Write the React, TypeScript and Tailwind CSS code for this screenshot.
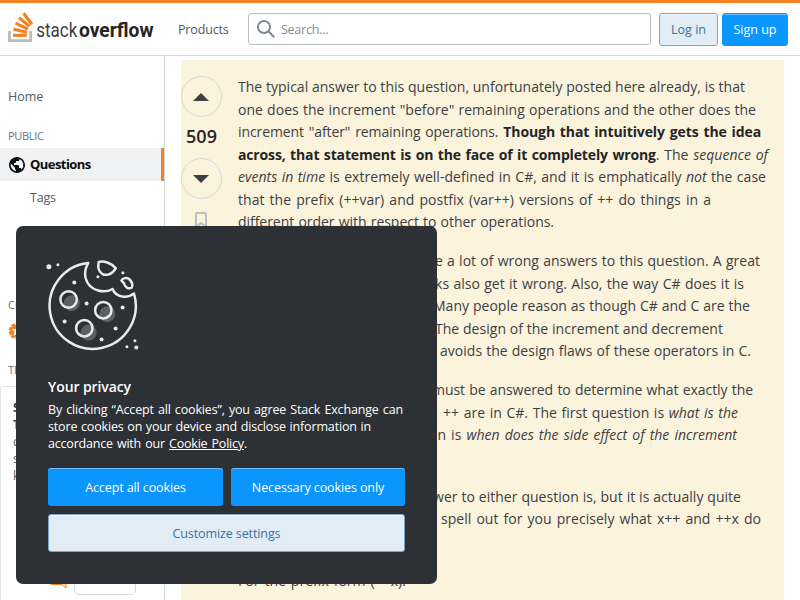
import type { ReactNode } from "react";

function Logo() {
  return (
    <svg width="150" height="32" viewBox="0 0 150 32" className="block shrink-0">
      <path d="M21.4 19H24v11H0V19h2.8v8.2h18.6z" fill="#bcbbbb" />
      <g stroke="#f48024" strokeWidth="3.1">
        <path d="M5 23.3h13.800" />
        <path d="M5.500 17.300l13.500 2.900" />
        <path d="M7.500 11.200l12.400 5.900" />
        <path d="M11 5.700l10.500 8.700" />
        <path d="M15.600 1.300l8.300 11" />
      </g>
      <text x="28.300" y="24.500" fontFamily="Roboto" fontSize="20" fontWeight="400" textLength="41" lengthAdjust="spacingAndGlyphs" fill="#3b3e41">stack</text>
      <text x="71" y="24.500" fontFamily="Roboto" fontSize="20" fontWeight="700" textLength="74.500" lengthAdjust="spacingAndGlyphs" fill="#222426">overflow</text>
    </svg>
  );
}

function Cookie() {
  return (
    <svg width="96" height="96" viewBox="43.400 257.500 96 96" fill="none" className="block">
      <g fill="#5c6064">
        <circle cx="71.200" cy="302.700" r="8" />
        <circle cx="106.700" cy="313.700" r="8" />
        <circle cx="88" cy="332" r="8" />
      </g>
      <g stroke="#e1ecf4" strokeWidth="2.500" strokeLinejoin="round">
        <path d="M87.600 262.400A43.100 43.100 0 1 0 133.400 293C127 298 115.500 297.500 112 288.500C103 293.500 91 290 86.500 281.500C83.500 275.500 83.800 269 87.600 262.400Z" />
        <path d="M98.200 261.400C103.500 260 111.500 263 115.200 267.800C111 274.500 105.500 275.500 101.500 273.300C98 271 97 266.500 98.200 261.400Z" />
        <path d="M120.800 280C122 277.500 126.500 276.500 129 279C131.500 281.500 132.700 285.500 131 287.200C128 289 124 286.500 123.500 282.800Z" />
        <circle cx="68" cy="299" r="8.200" />
        <circle cx="102.700" cy="309.700" r="8.200" />
        <circle cx="83.700" cy="327.700" r="8.200" />
      </g>
      <g fill="#e1ecf4">
        <circle cx="48.300" cy="266.300" r="2.500" />
        <circle cx="57.300" cy="264.300" r="1.500" />
        <circle cx="73.700" cy="282" r="2" />
        <circle cx="97.300" cy="276.300" r="1.500" />
        <circle cx="122.300" cy="272.300" r="1.500" />
        <circle cx="86" cy="303" r="2" />
        <circle cx="122" cy="307" r="2" />
        <circle cx="64" cy="321" r="2" />
        <circle cx="115" cy="328" r="2" />
        <circle cx="101" cy="339" r="2" />
        <circle cx="126.300" cy="346.300" r="1.500" />
        <circle cx="135.700" cy="347" r="2" />
        <circle cx="134.300" cy="340.300" r="1.500" />
      </g>
    </svg>
  );
}

function Header() {
  return (
    <header className="flex h-14 items-start border-b border-t-3 border-b-[#d6d9dc] border-t-[#f48225] pl-2">
      <div className="pt-[9px]">
        <Logo />
      </div>
      <span className="ml-5 mt-4 w-[70px] text-[12.5px] leading-[22px] tracking-[-0.15px] text-[#525960]">Products</span>
      <div className="mt-[10px] flex h-8 w-[403px] items-center rounded-[3px] border border-[#babfc4] pl-2">
        <svg width="18" height="18" viewBox="0 0 18 18" fill="#838c95">
          <path d="m18 16.500-5.140-5.180h-.350a7 7 0 1 0-1.190 1.190v.350L16.500 18zM12 7A5 5 0 1 1 2 7a5 5 0 0 1 10 0" />
        </svg>
        <span className="ml-[6px] pt-[3px] text-[12.5px] tracking-[-0.25px] text-[#838c95]">Search…</span>
      </div>
      <button className="ml-2 mt-[10px] h-[33px] w-[59px] rounded-[3px] border border-[#7aa7c7] bg-[#e1ecf4] pt-0.5 text-[12.5px] text-[#39739d] shadow-[inset_0_1px_0_rgba(255,255,255,0.7)]">Log in</button>
      <button className="ml-1 mt-[10px] h-[33px] w-[66px] rounded-[3px] border border-[#0a95ff] bg-[#0a95ff] pt-0.5 text-[12.5px] text-white shadow-[inset_0_1px_0_rgba(255,255,255,0.4)]">Sign up</button>
    </header>
  );
}

function Sidebar() {
  return (
    <aside className="flex h-[544px] w-[165px] shrink-0 flex-col border-r border-[#d6d9dc] text-[12.5px] text-[#525960]">
      <div className="mt-[28px] h-[26px] pl-2 leading-[26px]">Home</div>
      <div className="mt-[16px] h-5 pl-2 text-[11px] leading-5 tracking-[-0.3px] text-[#6a737c]">PUBLIC</div>
      <div className="mt-[2px] flex h-[33px] items-center border-r-3 border-[#f48225] bg-[#f1f2f3] pl-2 text-[13px] font-bold text-[#0c0d0e]">
        <svg width="18" height="18" viewBox="0 0 18 18" fill="#0c0d0e">
          <path d="M9 1C4.640 1 1 4.640 1 9s3.640 8 8 8 8-3.640 8-8-3.640-8-8-8M8 15.320a6.460 6.460 0 0 1-4.300-2.740 6.460 6.460 0 0 1-.930-5.010L7 11.680v.800c0 .880.120 1.320 1 1.320zm5.720-2c-.200-.660-1-1.320-1.720-1.320h-1v-2c0-.440-.560-1-1-1H6V7h1c.440 0 1-.560 1-1V5h2c.880 0 1.400-.720 1.400-1.600v-.330a6.450 6.450 0 0 1 3.830 4.510 6.450 6.450 0 0 1-1.510 5.730z" />
        </svg>
        <span className="ml-1 tracking-[-0.55px]">Questions</span>
      </div>
      <div className="h-[33px] pl-[30px] leading-[33px] tracking-[-0.2px]">Tags</div>
      <div className="mt-[81px] h-5 pl-2 text-[11px] leading-5 text-[#6a737c]">COLLECTIVES</div>
      <div className="mt-[7px] flex h-[18px] items-center pl-2">
        <svg width="18" height="18" viewBox="0 0 18 18">
          <circle cx="9" cy="9" r="7" fill="none" stroke="#f48024" strokeWidth="2.500" strokeDasharray="3.500 1" />
          <circle cx="9" cy="9" r="6.500" fill="#f48024" />
          <path d="m9 3.500 1.500 3.700h4l-3.200 2.500 1.200 4L9 11.500l-3.500 2.200 1.200-4-3.200-2.500h4z" fill="white" />
        </svg>
      </div>
      <div className="mt-[20px] h-5 pl-2 text-[11px] leading-5 text-[#6a737c]">TEAMS</div>
      <div className="mt-[6px] flex-1 rounded-tl-[3px] border-l border-t border-[#e3e6e8] pl-3 pt-3 text-[12px] leading-[17px]">
        <div className="font-bold text-[#3b4045]">Stack Overflow for<br />Teams</div>
        <div>collaborating and<br />sharing organizational<br />knowledge.</div>
        <div className="mt-[88px] flex h-[22px] items-start pl-9">
          <svg width="20" height="18" viewBox="0 0 20 18" fill="#fbe3d0" stroke="#f48024">
            <path d="M2 1h15v15l-4-3.500H2z" />
          </svg>
        </div>
      </div>
    </aside>
  );
}

function Line({ hidden, before, children, width }: { hidden?: string; before?: string; children?: ReactNode; width: string }) {
  return (
    <div className="flex h-[22.5px] whitespace-nowrap">
      {hidden && <span className={`shrink-0 overflow-hidden ${before ?? ""}`}>{hidden}</span>}
      <span className={`block shrink-0 [text-align-last:justify] ${width}`}>{children}</span>
    </div>
  );
}

function Answer() {
  return (
    <article className="flex flex-col gap-[16.5px] text-[14px] leading-[22.5px] tracking-[0.03px] text-[#3b4045]">
      <div>
        <Line width="w-[507px]">The typical answer to this question, unfortunately posted here already, is that</Line>
        <Line width="w-[518px]">one does the increment "before" remaining operations and the other does the</Line>
        <Line width="w-[523px]"><span className="tracking-[-0.1px]">increment "after" remaining operations. </span><b className="tracking-[-0.1px] text-[#232629]">Though that intuitively gets the idea</b></Line>
        <Line width="w-[530px]"><b className="tracking-[-0.15px] text-[#232629]">across, that statement is on the face of it completely wrong</b>. The <i>sequence of</i></Line>
        <Line width="w-[528px]"><i>events in time</i> is extremely well-defined in C#, and it is emphatically <i>not</i> the case</Line>
        <Line width="w-[473px]">that the prefix (++var) and postfix (var++) versions of ++ do things in a</Line>
        <Line width="w-[316px]"><span className="tracking-[-0.04px]">different order with respect to other operations.</span></Line>
      </div>
      <div>
        <Line hidden="There are a staggering, ar" before="w-[197px]" width="w-[325px]">e a lot of wrong answers to this question. A great</Line>
        <Line hidden="many “teach yourself C#” boo" before="w-[197px]" width="w-[309px]">ks also get it wrong. Also, the way C# does it is</Line>
        <Line hidden="different than how C does it." before="w-[195px]" width="w-[317px]">Many people reason as though C# and C are the</Line>
        <Line hidden="same language; they are not." before="w-[197px]" width="w-[288px]">The design of the increment and decrement</Line>
        <Line hidden="operators in C# in my opinion" before="w-[202px]" width="w-[311px]">avoids the design flaws of these operators in C.</Line>
      </div>
      <div>
        <Line hidden="There are two questions that" before="w-[194px]" width="w-[321px]"><span className="tracking-[-0.07px]">must be answered to determine what exactly the</span></Line>
        <Line hidden="operation of prefix and postfix" before="w-[205px]" width="w-[295px]">++ are in C#. The first question is <i>what is the</i></Line>
        <Line hidden="result? and the second questi" before="w-[191px]" width="w-[308px]">on is <i>when does the side effect of the increment</i></Line>
        <Line width="w-[80px]"><i>take place?</i></Line>
      </div>
      <div>
        <Line hidden="It is not obvious what the ans" before="w-[195px]" width="w-[308px]">wer to either question is, but it is actually quite</Line>
        <Line hidden="simple once you see it. Let me" before="w-[203px]" width="w-[320px]">spell out for you precisely what x++ and ++x do</Line>
        <Line width="w-[110px]">for a variable x.</Line>
      </div>
      <Line width="w-[168px]">For the prefix form (++x):</Line>
    </article>
  );
}

function Votes() {
  return (
    <div className="flex w-[41px] shrink-0 flex-col items-center pt-4">
      <span className="flex size-[41px] items-center justify-center rounded-full border border-[#d6d9dc] pr-px">
        <svg width="16" height="8" viewBox="0 0 16 8" fill="#3b4045"><path d="M0 8h16L8 0z" /></svg>
      </span>
      <span className="h-[41px] text-[18px] font-semibold leading-[38px] tracking-[0.1px] text-[#232629]">509</span>
      <span className="flex size-[41px] items-center justify-center rounded-full border border-[#d6d9dc] pr-px">
        <svg width="16" height="8" viewBox="0 0 16 8" fill="#3b4045"><path d="M0 0h16L8 8z" /></svg>
      </span>
      <svg width="12" height="16" viewBox="0 0 12 16" fill="none" stroke="#babfc4" strokeWidth="2" className="mr-px mt-[13px]">
        <path d="M1 15V2.500Q1 1 2.500 1h7Q11 1 11 2.500V15l-5-4z" />
      </svg>
    </div>
  );
}

function PrivacyDialog() {
  return (
    <section className="absolute left-4 top-[226px] h-[358px] w-[421px] rounded-[7px] bg-[#2d3135] pl-8 pt-8 text-white">
      <div className="-ml-1">
        <Cookie />
      </div>
      <h2 className="mt-[22px] text-[14px] font-semibold leading-[22px] tracking-[-0.1px]">Your privacy</h2>
      <div className="mt-[3px] text-[12.5px] leading-[17px] tracking-[-0.15px]">
        <div className="w-[355px] whitespace-nowrap [text-align-last:justify]">By clicking “Accept all cookies”, you agree Stack Exchange can</div>
        <div className="w-[323px] whitespace-nowrap [text-align-last:justify]">store cookies on your device and disclose information in</div>
        <div className="w-[199px] whitespace-nowrap tracking-[-0.2px] [text-align-last:justify]">accordance with our <span className="underline">Cookie Policy</span>.</div>
      </div>
      <div className="mt-4 flex gap-2 text-[12.5px]">
        <button className="h-[38px] w-[175px] rounded-[3px] bg-[#0a95ff] pt-0.5 tracking-[-0.1px] shadow-[inset_0_1px_0_rgba(255,255,255,0.4)]">Accept all cookies</button>
        <button className="h-[38px] w-[174px] rounded-[3px] bg-[#0a95ff] pt-0.5 tracking-[-0.1px] shadow-[inset_0_1px_0_rgba(255,255,255,0.4)]">Necessary cookies only</button>
      </div>
      <button className="mt-2 h-[38px] w-[357px] rounded-[3px] border border-[#7aa7c7] bg-[#e1ecf4] pt-0.5 text-[12.5px] tracking-[-0.1px] text-[#39739d] shadow-[inset_0_1px_0_rgba(255,255,255,0.7)]">Customize settings</button>
    </section>
  );
}

export default function App() {
  return (
    <div className="relative h-[600px] w-[800px] overflow-hidden bg-white font-['Open_Sans','Noto_Sans',sans-serif]">
      <Header />
      <div className="flex">
        <Sidebar />
        <main className="ml-4 mt-1 flex h-[540px] w-[603px] gap-4 bg-[#fbf3db]">
          <Votes />
          <div className="pt-4">
            <Answer />
          </div>
        </main>
      </div>
      <div className="absolute left-[74px] top-[560px] h-[35px] w-[62px] rounded-[5px] border border-[#d6d9dc] bg-white" />
      <PrivacyDialog />
    </div>
  );
}
